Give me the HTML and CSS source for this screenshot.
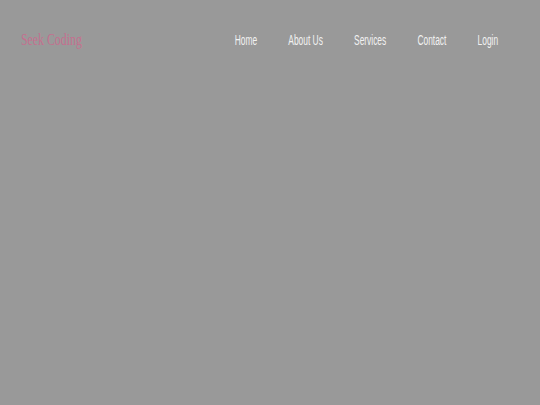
FILE: index.html
```html
<!DOCTYPE html>
<html lang="en">
<head>
<meta charset="utf-8">
<title>Seek Coding</title>
<link rel="stylesheet" href="styles.css">
</head>
<body>
<header class="header">
  <div class="brand"><a class="logo" href="#">Seek Coding</a></div>
  <nav class="nav">
    <a href="#">Home</a>
    <a href="#">About Us</a>
    <a href="#">Services</a>
    <a href="#">Contact</a>
    <a href="#">Login</a>
  </nav>
</header>
</body>
</html>
```
FILE: styles.css
```css
html, body {
  margin: 0;
  padding: 0;
  height: 100%;
  background: #999999;
}
.header {
  display: flex;
  align-items: center;
  height: 80px;
  padding: 0 42px 0 21px;
}
.brand {
  flex: 1 1 0;
  min-width: 0;
  white-space: nowrap;
}
.logo {
  display: inline-block;
  font-family: "Liberation Serif", serif;
  font-size: 16px;
  color: #c4708f;
  text-decoration: none;
  transform: scaleX(0.74);
  transform-origin: left center;
}
.nav {
  flex: none;
  display: flex;
  gap: 52px;
  white-space: nowrap;
  transform: scaleX(0.6);
  transform-origin: right center;
}
.nav a {
  font-family: "Liberation Sans", sans-serif;
  font-size: 14px;
  color: #f2f2f2;
  text-decoration: none;
}
```
